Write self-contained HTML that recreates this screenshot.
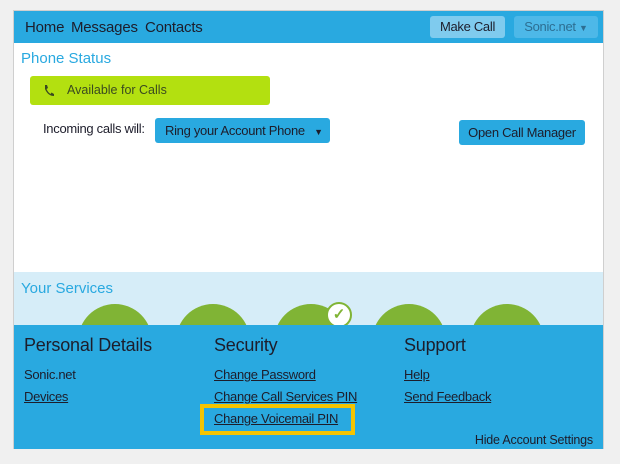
<!DOCTYPE html>
<html><head><style>
*{margin:0;padding:0;box-sizing:border-box}
body{width:620px;height:464px;background:#f0f0f0;font-family:"Liberation Sans",sans-serif;position:relative;overflow:hidden;color:#1d1d2b}
.a{position:absolute;white-space:nowrap}
.frame{left:13px;top:10px;width:591px;height:439px;border:1px solid #cfcfcf;background:#fff}
.nav{left:14px;top:11px;width:589px;height:32px;background:#29a9e0}
.nav span{position:absolute;top:8px;font-size:15px;letter-spacing:-0.2px}
.btn{border-radius:3px;font-size:13px;text-align:center;letter-spacing:-0.3px}
a{color:#1d1d2b;text-decoration:underline}
.ft{font-size:13px;letter-spacing:-0.3px}
h2{font-weight:normal;font-size:18px;position:absolute;letter-spacing:-0.2px}
.circ{top:304px;width:74px;height:74px;border-radius:50%;background:#80b435}
</style></head><body>
<div class="a frame"></div>
<div class="a nav">
<span style="left:11px">Home</span><span style="left:57px">Messages</span><span style="left:131px">Contacts</span>
<div class="a btn" style="left:416px;top:5px;width:75px;height:22px;background:#7fcbee;line-height:22px">Make Call</div>
<div class="a btn" style="left:500px;top:5px;width:84px;height:22px;background:#4db8e8;line-height:22px;color:#2d6e92">Sonic.net <span style="position:static;font-size:9px">▼</span></div>
</div>
<div class="a" style="left:21px;top:50px;font-size:15px;color:#29a9e0">Phone Status</div>
<div class="a" style="left:30px;top:76px;width:240px;height:29px;background:#b3e010;border-radius:3px">
<svg class="a" style="left:13px;top:8px" width="12" height="13" viewBox="0 0 12 13"><path d="M2 1 L4 1 L5 4 L3.5 5 Q5 8.5 7.5 10 L8.5 8.5 L11 10 L11 12 Q5 12 2 5 Z" fill="#3a4a20"/></svg>
<span class="a" style="left:37px;top:7px;font-size:12.5px;color:#3a4a20">Available for Calls</span></div>
<div class="a" style="left:43px;top:121px;font-size:13px;letter-spacing:-0.3px">Incoming calls will:</div>
<div class="a btn" style="left:155px;top:118px;width:175px;height:25px;background:#29a9e0;line-height:25px;text-align:left;padding-left:10px">Ring your Account Phone <span style="font-size:9px;margin-left:6px">▼</span></div>
<div class="a btn" style="left:459px;top:120px;width:126px;height:25px;background:#29a9e0;line-height:25px">Open Call Manager</div>
<div class="a" style="left:14px;top:272px;width:589px;height:53px;background:#d6edf8"></div>
<div class="a" style="left:21px;top:280px;font-size:15px;color:#29a9e0">Your Services</div>
<div class="a circ" style="left:78px"></div><div class="a circ" style="left:176px"></div><div class="a circ" style="left:274px"></div><div class="a circ" style="left:372px"></div><div class="a circ" style="left:470px"></div>
<div class="a" style="left:326px;top:302px;width:26px;height:26px;border-radius:50%;background:#fff;border:2px solid #80b435;color:#80b435;font-size:15px;text-align:center;line-height:22px;font-weight:bold">✓</div>
<div class="a" style="left:14px;top:325px;width:589px;height:124px;background:#29a9e0"></div>
<h2 style="left:24px;top:335px">Personal Details</h2>
<h2 style="left:214px;top:335px">Security</h2>
<h2 style="left:404px;top:335px">Support</h2>
<div class="a ft" style="left:24px;top:367px">Sonic.net</div>
<div class="a ft" style="left:24px;top:389px"><a>Devices</a></div>
<div class="a ft" style="left:214px;top:367px"><a>Change Password</a></div>
<div class="a ft" style="left:214px;top:389px"><a>Change Call Services PIN</a></div>
<div class="a ft" style="left:214px;top:411px"><a>Change Voicemail PIN</a></div>
<div class="a" style="left:200px;top:404px;width:155px;height:31px;border:4px solid #f5c400"></div>
<div class="a ft" style="left:404px;top:367px"><a>Help</a></div>
<div class="a ft" style="left:404px;top:389px"><a>Send Feedback</a></div>
<div class="a" style="right:27px;top:433px;font-size:12.5px;letter-spacing:-0.2px">Hide Account Settings</div>
</body></html>
